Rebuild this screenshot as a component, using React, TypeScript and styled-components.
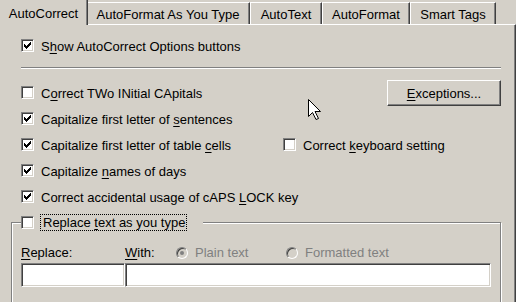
import React from 'react';
import styled, { createGlobalStyle, css } from 'styled-components';

const FACE = '#d4d0c8';
const SHADOW = '#808080';
const DARK = '#404040';
const FONT = '"Liberation Sans", Arial, sans-serif';

const GlobalStyle = createGlobalStyle`
  html, body { margin: 0; padding: 0; background: ${FACE}; }
  body { width: 516px; height: 302px; overflow: hidden; }
`;

const Dialog = styled.div`
  position: relative;
  width: 516px;
  height: 302px;
  overflow: hidden;
  background: ${FACE};
  color: #000;
  font-family: ${FONT};
  font-size: 13px;
  line-height: 15px;
`;

const TabStrip = styled.div`
  display: flex;
  align-items: flex-end;
  height: 24px;
`;

const Tab = styled.div<{ $active?: boolean; $width: number }>`
  box-sizing: border-box;
  flex: none;
  width: ${p => p.$width}px;
  text-align: center;
  white-space: nowrap;
  background: ${FACE};
  border-right: 1px solid ${DARK};
  box-shadow: inset -1px 0 ${SHADOW};
  ${p =>
    p.$active
      ? css`
          position: relative;
          z-index: 1;
          height: 25px;
          padding-top: 6px;
          margin-right: -2px;
          margin-bottom: -1px;
        `
      : css`
          height: 22px;
          padding-top: 4px;
          border-left: 1px solid #fff;
          border-top: 1px solid #fff;
        `}
`;

const Panel = styled.div`
  box-sizing: border-box;
  height: 278px;
  border-top: 1px solid #fff;
  border-right: 1px solid ${DARK};
  box-shadow: inset -1px 0 ${SHADOW};
  padding: 8px 14px 0 11px;
`;

const Section = styled.div`
  padding-left: 10px;
`;

const Row = styled.div<{ $area?: string }>`
  box-sizing: border-box;
  display: flex;
  align-items: flex-start;
  height: 26px;
  padding-top: 6px;
  white-space: nowrap;
  ${p => p.$area && css`grid-area: ${p.$area};`}
`;

const Label = styled.span`
  margin-left: 7px;
  white-space: nowrap;
  u { text-underline-offset: 2px; }
`;

const Separator = styled.hr`
  margin: 8px 0 11px;
  height: 0;
  border: 0;
  border-top: 1px solid ${SHADOW};
  border-bottom: 1px solid #fff;
`;

const OptionsGrid = styled.div`
  display: grid;
  grid-template-columns: 262px 1fr;
  grid-auto-rows: 26px;
`;

const Button = styled.button<{ $area: string }>`
  grid-area: ${p => p.$area};
  justify-self: end;
  box-sizing: border-box;
  width: 114px;
  height: 26px;
  margin: 0;
  padding: 0;
  background: ${FACE};
  color: #000;
  font: inherit;
  border: 1px solid;
  border-color: #fff ${DARK} ${DARK} #fff;
  box-shadow: inset -1px -1px ${SHADOW}, inset 1px 1px ${FACE};
  u { text-underline-offset: 2px; }
`;

const Box = styled.span`
  box-sizing: border-box;
  flex: none;
  display: block;
  width: 13px;
  height: 13px;
  background: #fff;
  border: 1px solid;
  border-color: ${SHADOW} #fff #fff ${SHADOW};
  box-shadow: inset 1px 1px ${DARK}, inset -1px -1px ${FACE};
  svg { display: block; margin: 2px 0 0 2px; }
`;

const GroupBox = styled.fieldset`
  margin: 4px 0 0;
  padding: 14px 9px 30px;
  min-width: 0;
  border: 1px solid ${SHADOW};
  box-shadow: inset 1px 1px #fff, 1px 1px #fff;
`;

const Legend = styled.legend`
  display: flex;
  align-items: center;
  margin: 0;
  padding: 0 16px 0 0;
  background: ${FACE};
`;

const FocusLabel = styled.span`
  margin-left: 6px;
  padding: 0 1px 0 2px;
  border: 1px dotted #000;
  white-space: nowrap;
  u { text-underline-offset: 2px; }
`;

const ReplaceGrid = styled.div`
  display: grid;
  grid-template-columns: 104px 1fr;
  row-gap: 3px;
`;

const FieldLabel = styled.span`
  white-space: nowrap;
  u { text-underline-offset: 2px; }
`;

const WithRow = styled.div`
  display: grid;
  grid-template-columns: 51px 110px auto;
  align-items: start;
`;

const RadioOption = styled.div`
  display: flex;
  align-items: flex-start;
  color: ${SHADOW};
  white-space: nowrap;
`;

const RadioCircle = styled.span<{ $checked?: boolean }>`
  box-sizing: border-box;
  flex: none;
  width: 12px;
  height: 12px;
  margin: 2px 7px 0 0;
  border-radius: 50%;
  border: 1px solid;
  border-color: ${SHADOW} #fff #fff ${SHADOW};
  box-shadow: inset 1px 1px ${DARK}, inset -1px -1px ${FACE};
  background: ${FACE};
  display: flex;
  align-items: center;
  justify-content: center;
  &::after {
    content: '';
    display: ${p => (p.$checked ? 'block' : 'none')};
    width: 4px;
    height: 4px;
    border-radius: 50%;
    background: ${SHADOW};
  }
`;

const TextBox = styled.input`
  box-sizing: border-box;
  display: block;
  width: 100%;
  height: 24px;
  margin: 0;
  padding: 0 3px;
  background: #fff;
  font: inherit;
  outline: none;
  border: 1px solid;
  border-color: ${SHADOW} #fff #fff ${SHADOW};
  box-shadow: inset 1px 1px ${DARK}, inset -1px -1px ${FACE};
`;

const Cursor = styled.svg`
  position: absolute;
  left: 308px;
  top: 99px;
  z-index: 5;
  pointer-events: none;
`;

const CHECK_COLS = [2, 3, 4, 3, 2, 1, 0];

const CheckMark = () => (
  <svg width="7" height="7" viewBox="0 0 7 7" shapeRendering="crispEdges">
    {CHECK_COLS.map((top, x) => (
      <rect key={x} x={x} y={top} width="1" height="3" fill="#000" />
    ))}
  </svg>
);

const CheckBox = ({ checked }: { checked?: boolean }) => (
  <Box>{checked && <CheckMark />}</Box>
);

type Opt = { area: string; checked: boolean; label: React.ReactNode };

const options: Opt[] = [
  { area: '1 / 1', checked: false, label: <>C<u>o</u>rrect TWo INitial CApitals</> },
  { area: '2 / 1', checked: true, label: <>Capitalize first letter of <u>s</u>entences</> },
  { area: '3 / 1', checked: true, label: <>Capitalize first letter of table <u>c</u>ells</> },
  { area: '3 / 2', checked: false, label: <>Correct <u>k</u>eyboard setting</> },
  { area: '4 / 1', checked: true, label: <>Capitalize <u>n</u>ames of days</> },
  { area: '5 / 1 / 6 / 3', checked: true, label: <>Correct accidental usage of cAPS <u>L</u>OCK key</> },
];

const tabs = [
  { label: 'AutoCorrect', width: 88, active: true },
  { label: 'AutoFormat As You Type', width: 164 },
  { label: 'AutoText', width: 72 },
  { label: 'AutoFormat', width: 88 },
  { label: 'Smart Tags', width: 86 },
];

export default function App() {
  return (
    <>
      <GlobalStyle />
      <Dialog>
        <TabStrip>
          {tabs.map(t => (
            <Tab key={t.label} $active={t.active} $width={t.width}>
              {t.label}
            </Tab>
          ))}
        </TabStrip>
        <Panel>
          <Section>
            <Row>
              <CheckBox checked />
              <Label>
                S<u>h</u>ow AutoCorrect Options buttons
              </Label>
            </Row>
            <Separator />
            <OptionsGrid>
              {options.map((o, i) => (
                <Row key={i} $area={o.area}>
                  <CheckBox checked={o.checked} />
                  <Label>{o.label}</Label>
                </Row>
              ))}
              <Button $area="1 / 2">
                <u>E</u>xceptions...
              </Button>
            </OptionsGrid>
          </Section>
          <GroupBox>
            <Legend>
              <CheckBox />
              <FocusLabel>
                Replace <u>t</u>ext as you type
              </FocusLabel>
            </Legend>
            <ReplaceGrid>
              <FieldLabel>
                <u>R</u>eplace:
              </FieldLabel>
              <WithRow>
                <FieldLabel>
                  <u>W</u>ith:
                </FieldLabel>
                <RadioOption>
                  <RadioCircle $checked />
                  Plain text
                </RadioOption>
                <RadioOption>
                  <RadioCircle />
                  Formatted text
                </RadioOption>
              </WithRow>
              <TextBox />
              <TextBox />
            </ReplaceGrid>
          </GroupBox>
        </Panel>
        <Cursor width="13" height="21" viewBox="0 0 13 21">
          <path
            d="M0.5 0.5 V17.5 L4.5 13.5 L8 20.5 L10.5 19.5 L7 12.5 H12.5 Z"
            fill="#fff"
            stroke="#000"
            strokeWidth="1"
          />
        </Cursor>
      </Dialog>
    </>
  );
}
